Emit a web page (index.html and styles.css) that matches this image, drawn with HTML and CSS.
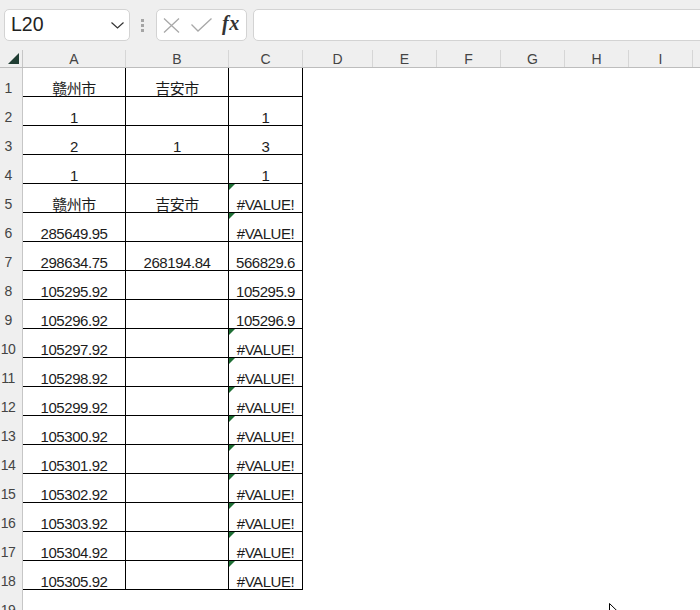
FILE: index.html
```html
<!DOCTYPE html>
<html lang="zh">
<head>
<meta charset="utf-8">
<title>Sheet</title>
<link rel="stylesheet" href="styles.css">
</head>
<body>
<div class="toolbar">
  <div class="namebox">
    <span class="ref">L20</span>
    <svg class="chev" width="13" height="7" viewBox="0 0 13 7"><polyline points="0.5,0.5 6.5,6 12.5,0.5" fill="none" stroke="#333" stroke-width="1.2"/></svg>
  </div>
  <div class="grip"><span></span><span></span><span></span></div>
  <div class="fxbox">
    <svg class="ico-x" width="17" height="15" viewBox="0 0 17 15"><path d="M1 0.5 L16 14.5 M16 0.5 L1 14.5" stroke="#a8a8a8" stroke-width="1.3" fill="none"/></svg>
    <svg class="ico-ok" width="21" height="14" viewBox="0 0 21 14"><path d="M0.5 6.5 L7 13 L20.5 0.5" stroke="#a8a8a8" stroke-width="1.3" fill="none"/></svg>
    <span class="fx">fx</span>
  </div>
  <div class="formula"></div>
</div>

<div class="colhead">
  <div class="hc corner"><svg width="11" height="11" viewBox="0 0 11 11"><polygon points="11,0 11,11 0,11" fill="#203d33"/></svg></div>
  <div class="hc">A</div>
  <div class="hc">B</div>
  <div class="hc">C</div>
  <div class="hc">D</div>
  <div class="hc">E</div>
  <div class="hc">F</div>
  <div class="hc">G</div>
  <div class="hc">H</div>
  <div class="hc">I</div>
  <div class="hc last"></div>
</div>

<div class="rows">
  <div class="row"><div class="rh">1</div><div class="c">赣州市</div><div class="c">吉安市</div><div class="c"></div><div class="rest"></div></div>
  <div class="row"><div class="rh">2</div><div class="c">1</div><div class="c"></div><div class="c">1</div><div class="rest"></div></div>
  <div class="row"><div class="rh">3</div><div class="c">2</div><div class="c">1</div><div class="c">3</div><div class="rest"></div></div>
  <div class="row"><div class="rh">4</div><div class="c">1</div><div class="c"></div><div class="c">1</div><div class="rest"></div></div>
  <div class="row"><div class="rh">5</div><div class="c">赣州市</div><div class="c">吉安市</div><div class="c err">#VALUE!</div><div class="rest"></div></div>
  <div class="row"><div class="rh">6</div><div class="c">285649.95</div><div class="c"></div><div class="c err">#VALUE!</div><div class="rest"></div></div>
  <div class="row"><div class="rh">7</div><div class="c">298634.75</div><div class="c">268194.84</div><div class="c">566829.6</div><div class="rest"></div></div>
  <div class="row"><div class="rh">8</div><div class="c">105295.92</div><div class="c"></div><div class="c">105295.9</div><div class="rest"></div></div>
  <div class="row"><div class="rh">9</div><div class="c">105296.92</div><div class="c"></div><div class="c">105296.9</div><div class="rest"></div></div>
  <div class="row"><div class="rh">10</div><div class="c">105297.92</div><div class="c"></div><div class="c err">#VALUE!</div><div class="rest"></div></div>
  <div class="row"><div class="rh">11</div><div class="c">105298.92</div><div class="c"></div><div class="c err">#VALUE!</div><div class="rest"></div></div>
  <div class="row"><div class="rh">12</div><div class="c">105299.92</div><div class="c"></div><div class="c err">#VALUE!</div><div class="rest"></div></div>
  <div class="row"><div class="rh">13</div><div class="c">105300.92</div><div class="c"></div><div class="c err">#VALUE!</div><div class="rest"></div></div>
  <div class="row"><div class="rh">14</div><div class="c">105301.92</div><div class="c"></div><div class="c err">#VALUE!</div><div class="rest"></div></div>
  <div class="row"><div class="rh">15</div><div class="c">105302.92</div><div class="c"></div><div class="c err">#VALUE!</div><div class="rest"></div></div>
  <div class="row"><div class="rh">16</div><div class="c">105303.92</div><div class="c"></div><div class="c err">#VALUE!</div><div class="rest"></div></div>
  <div class="row"><div class="rh">17</div><div class="c">105304.92</div><div class="c"></div><div class="c err">#VALUE!</div><div class="rest"></div></div>
  <div class="row"><div class="rh">18</div><div class="c">105305.92</div><div class="c"></div><div class="c err">#VALUE!</div><div class="rest"></div></div>
  <div class="row"><div class="rh">19</div><div class="e"></div><div class="e"></div><div class="e"></div><div class="rest"></div></div>
</div>

<svg class="cursor" width="12" height="18" viewBox="0 0 12 18"><path d="M0.5 0.5 L0.5 14 L3.8 10.8 L6.3 16.5 L8.3 15.6 L5.9 10.2 L10.5 10.2 Z" fill="#fff" stroke="#000" stroke-width="1"/></svg>
</body>
</html>
```

FILE: styles.css
```css
html, body {
  margin: 0;
  padding: 0;
}
body {
  width: 700px;
  height: 610px;
  overflow: hidden;
  background: #fff;
  font-family: "Liberation Sans", "Noto Sans CJK SC", sans-serif;
  color: #1c1c1c;
  position: relative;
}

/* ---------- toolbar ---------- */
.toolbar {
  height: 50px;
  box-sizing: border-box;
  background: #efefef;
  display: flex;
  align-items: flex-start;
  padding: 9px 0 0 4px;
  margin-right: -10px;
}
.namebox {
  flex: none;
  width: 126px;
  height: 32px;
  box-sizing: border-box;
  background: #fff;
  border: 1px solid #d3d3d3;
  border-radius: 5px;
  display: flex;
  align-items: center;
  justify-content: space-between;
  padding: 0 5px 2px 6px;
  font-size: 19.5px;
  color: #222;
}
.chev {
  margin-top: 3px;
}
.grip {
  flex: none;
  margin-left: 11px;
  width: 3px;
  display: flex;
  flex-direction: column;
  gap: 2px;
  padding-top: 10px;
}
.grip span {
  width: 3px;
  height: 3px;
  background: #a5a5a5;
}
.fxbox {
  flex: none;
  margin-left: 12px;
  width: 91px;
  height: 32px;
  box-sizing: border-box;
  background: #fff;
  border: 1px solid #d3d3d3;
  border-radius: 5px;
  display: flex;
  align-items: center;
  padding-left: 6px;
}
.ico-x {
  margin-right: 11px;
}
.ico-ok {
  margin-right: 10px;
}
.fx {
  font-family: "Liberation Serif", "DejaVu Serif", serif;
  font-style: italic;
  font-weight: bold;
  font-size: 20px;
  color: #333;
  margin-top: -3px;
  letter-spacing: 0.5px;
}
.formula {
  flex: 1;
  margin-left: 6px;
  height: 32px;
  box-sizing: border-box;
  background: #fff;
  border: 1px solid #d3d3d3;
  border-radius: 5px;
}

/* ---------- column header ---------- */
.colhead {
  display: grid;
  grid-template-columns: 23px 103px 103px 74px 70px 64px 64px 64px 64px 64px 1fr;
  height: 18px;
  box-sizing: border-box;
  background: #efefef;
  border-bottom: 1px solid #bdbdbd;
}
.hc {
  border-right: 1px solid #d6d6d6;
  font-size: 14px;
  line-height: 15px;
  color: #444;
  display: flex;
  justify-content: center;
  align-items: flex-end;
  padding-top: 1px;
}
.hc.corner {
  border-right-color: #c6c6c6;
  justify-content: flex-start;
  align-items: flex-start;
  padding: 3px 0 0 8px;
}
.hc.last {
  border-right: none;
}

/* ---------- rows ---------- */
.row {
  display: grid;
  grid-template-columns: 23px 103px 103px 74px 1fr;
  height: 29px;
}
.rh {
  background: #efefef;
  border-right: 1px solid #c6c6c6;
  font-size: 14px;
  letter-spacing: -0.6px;
  line-height: 15px;
  color: #444;
  display: flex;
  justify-content: center;
  align-items: flex-end;
  padding-right: 6px;
  padding-bottom: 1px;
}
.c {
  position: relative;
  box-sizing: border-box;
  border-right: 1px solid #000;
  border-bottom: 1px solid #000;
  font-size: 15px;
  letter-spacing: -0.45px;
  line-height: 15px;
  display: flex;
  justify-content: center;
  align-items: flex-end;
  white-space: nowrap;
}
.c.err::before {
  content: "";
  position: absolute;
  top: 0;
  left: 0;
  border-top: 6px solid #1e6e34;
  border-right: 6px solid transparent;
}
.e, .rest {
  background: #fff;
}

.cursor {
  position: absolute;
  left: 609px;
  top: 603px;
}
```
